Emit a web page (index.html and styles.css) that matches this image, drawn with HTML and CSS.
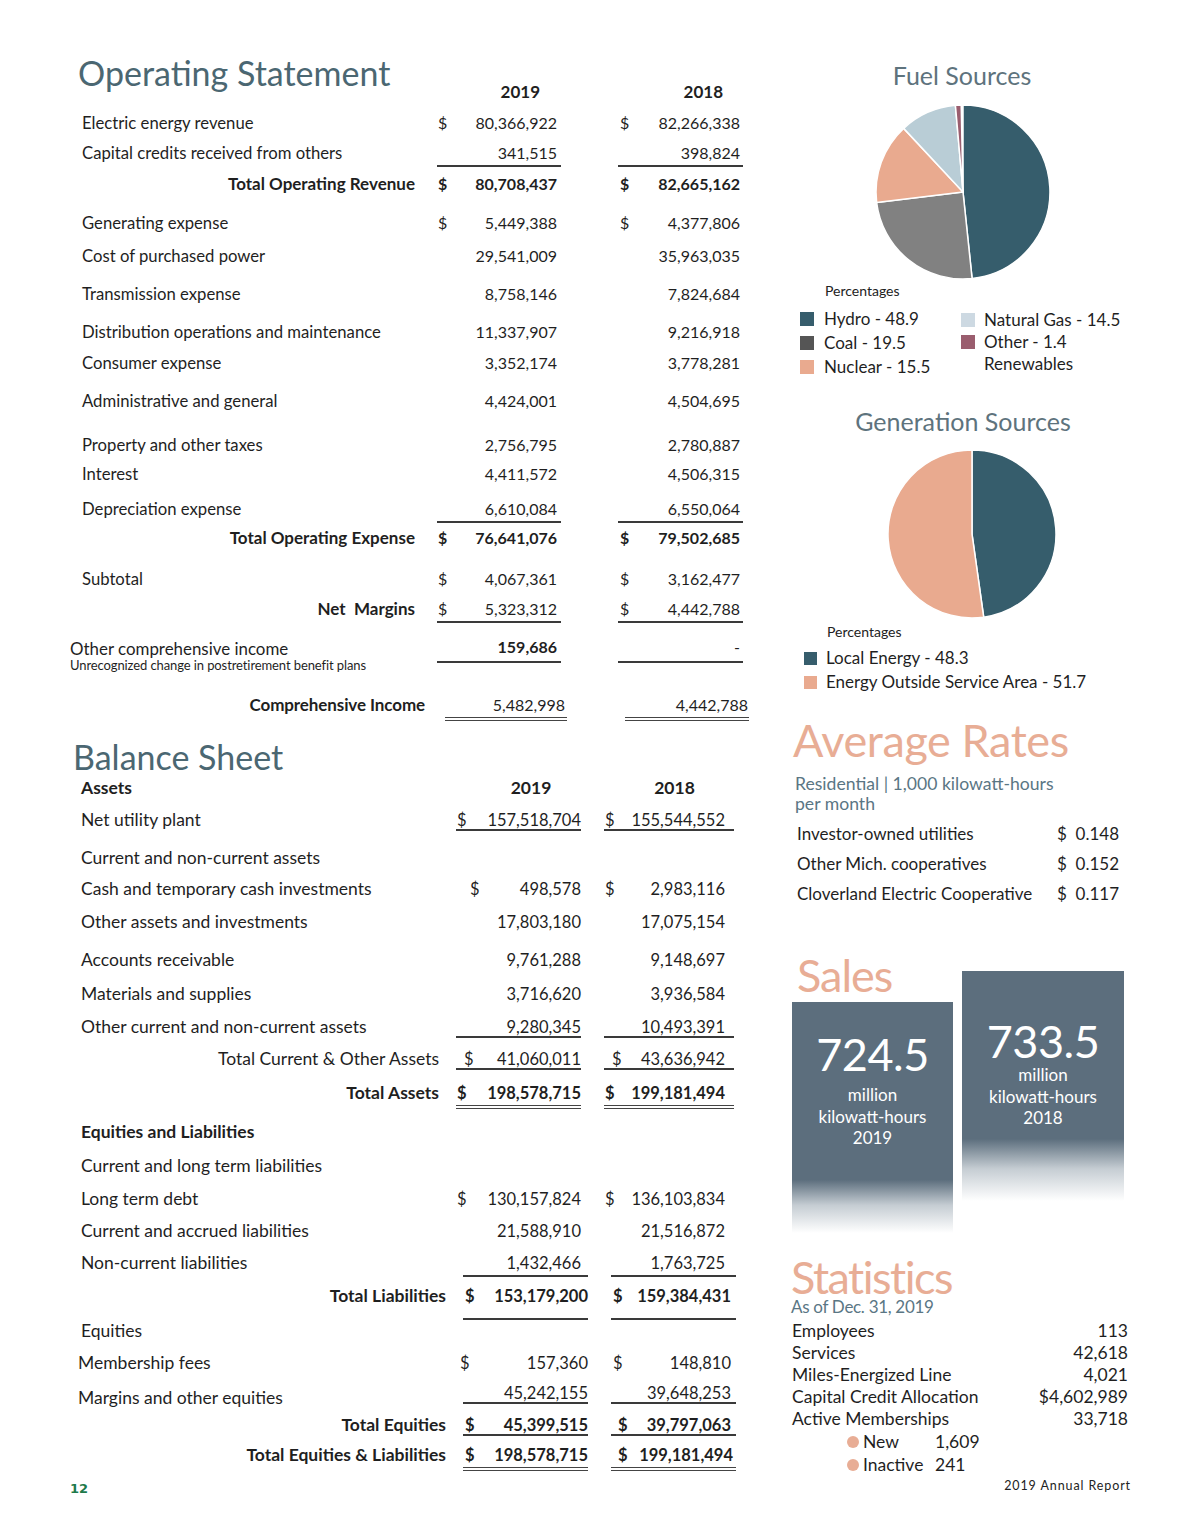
FILE: index.html
```html
<!DOCTYPE html>
<html lang="en">
<head>
<meta charset="utf-8">
<title>2019 Annual Report – Financials</title>
<link rel="stylesheet" href="styles.css">
</head>
<body>
<div class="page">
  <div class="left">
    <section class="os">
      <div class="os-head">
        <h1 class="title">Operating Statement</h1>
        <div class="yr yr1">2019</div><div></div><div class="yr yr2">2018</div>
      </div>
      <div class="r mt3"><span class="lbl">Electric energy revenue</span><span class="c"><span class="cur">$</span><span class="amt">80,366,922</span></span><span></span><span class="c"><span class="cur">$</span><span class="amt">82,266,338</span></span></div>
      <div class="r mt2"><span class="lbl">Capital credits received from others</span><span class="c ln"><span class="amt">341,515</span></span><span></span><span class="c ln"><span class="amt">398,824</span></span></div>
      <div class="r mt3 bold"><span class="lbl tot">Total Operating Revenue</span><span class="c"><span class="cur">$</span><span class="amt">80,708,437</span></span><span></span><span class="c"><span class="cur">$</span><span class="amt">82,665,162</span></span></div>
      <div class="r mt11"><span class="lbl">Generating expense</span><span class="c"><span class="cur">$</span><span class="amt">5,449,388</span></span><span></span><span class="c"><span class="cur">$</span><span class="amt">4,377,806</span></span></div>
      <div class="r mt5"><span class="lbl">Cost of purchased power</span><span class="c"><span class="amt">29,541,009</span></span><span></span><span class="c"><span class="amt">35,963,035</span></span></div>
      <div class="r mt10"><span class="lbl">Transmission expense</span><span class="c"><span class="amt">8,758,146</span></span><span></span><span class="c"><span class="amt">7,824,684</span></span></div>
      <div class="r mt10"><span class="lbl">Distribution operations and maintenance</span><span class="c"><span class="amt">11,337,907</span></span><span></span><span class="c"><span class="amt">9,216,918</span></span></div>
      <div class="r mt3"><span class="lbl">Consumer expense</span><span class="c"><span class="amt">3,352,174</span></span><span></span><span class="c"><span class="amt">3,778,281</span></span></div>
      <div class="r mt10"><span class="lbl">Administrative and general</span><span class="c"><span class="amt">4,424,001</span></span><span></span><span class="c"><span class="amt">4,504,695</span></span></div>
      <div class="r mt16"><span class="lbl">Property and other taxes</span><span class="c"><span class="amt">2,756,795</span></span><span></span><span class="c"><span class="amt">2,780,887</span></span></div>
      <div class="r mt1"><span class="lbl">Interest</span><span class="c"><span class="amt">4,411,572</span></span><span></span><span class="c"><span class="amt">4,506,315</span></span></div>
      <div class="r mt7"><span class="lbl">Depreciation expense</span><span class="c ln"><span class="amt">6,610,084</span></span><span></span><span class="c ln"><span class="amt">6,550,064</span></span></div>
      <div class="r mt1 bold"><span class="lbl tot">Total Operating Expense</span><span class="c"><span class="cur">$</span><span class="amt">76,641,076</span></span><span></span><span class="c"><span class="cur">$</span><span class="amt">79,502,685</span></span></div>
      <div class="r mt13"><span class="lbl">Subtotal</span><span class="c"><span class="cur">$</span><span class="amt">4,067,361</span></span><span></span><span class="c"><span class="cur">$</span><span class="amt">3,162,477</span></span></div>
      <div class="r mt2"><span class="lbl tot bold">Net&nbsp; Margins</span><span class="c ln"><span class="cur">$</span><span class="amt">5,323,312</span></span><span></span><span class="c ln"><span class="cur">$</span><span class="amt">4,442,788</span></span></div>
      <div class="r mt10"><span class="lbl lbl-oci"><span class="oci-main">Other comprehensive income</span><span class="oci-sub">Unrecognized change in postretirement benefit plans</span></span><span class="c ln30"><span class="amt bold">159,686</span></span><span></span><span class="c ln30"><span class="amt">-</span></span></div>
      <div class="r r-ci mt19"><span class="lbl tot bold ci-lbl">Comprehensive Income</span><span class="c dbl"><span class="amt">5,482,998</span></span><span></span><span class="c dbl"><span class="amt">4,442,788</span></span></div>
    </section>

    <section class="bs">
      <h1 class="title bs-title">Balance Sheet</h1>
      <div class="r bs-a bs-head bold"><span class="lbl">Assets</span><span class="yr3">2019</span><span></span><span class="yr4">2018</span></div>
      <div class="r bs-a mt5"><span class="lbl">Net utility plant</span><span class="c ul"><span class="cur">$</span><span class="amt">157,518,704</span></span><span></span><span class="c ul"><span class="cur">$</span><span class="amt">155,544,552</span></span></div>
      <div class="r bs-a mt10"><span class="lbl">Current and non-current assets</span></div>
      <div class="r bs-a mt3"><span class="lbl">Cash and temporary cash investments</span><span class="c"><span class="cur cur-in">$</span><span class="amt">498,578</span></span><span></span><span class="c"><span class="cur">$</span><span class="amt">2,983,116</span></span></div>
      <div class="r bs-a mt5"><span class="lbl">Other assets and investments</span><span class="c"><span class="amt">17,803,180</span></span><span></span><span class="c"><span class="amt">17,075,154</span></span></div>
      <div class="r bs-a mt10"><span class="lbl">Accounts receivable</span><span class="c"><span class="amt">9,761,288</span></span><span></span><span class="c"><span class="amt">9,148,697</span></span></div>
      <div class="r bs-a mt6"><span class="lbl">Materials and supplies</span><span class="c"><span class="amt">3,716,620</span></span><span></span><span class="c"><span class="amt">3,936,584</span></span></div>
      <div class="r bs-a mt5"><span class="lbl">Other current and non-current assets</span><span class="c ul"><span class="amt">9,280,345</span></span><span></span><span class="c ul"><span class="amt">10,493,391</span></span></div>
      <div class="r bs-a mt4"><span class="lbl tot">Total Current &amp; Other Assets</span><span class="c ul"><span class="cur cur-s">$</span><span class="amt">41,060,011</span></span><span></span><span class="c ul"><span class="cur cur-s">$</span><span class="amt">43,636,942</span></span></div>
      <div class="r bs-a mt6 bold"><span class="lbl tot">Total Assets</span><span class="c dbl"><span class="cur">$</span><span class="amt">198,578,715</span></span><span></span><span class="c dbl"><span class="cur">$</span><span class="amt">199,181,494</span></span></div>
      <div class="r bs-a mt9 bold"><span class="lbl">Equities and Liabilities</span></div>
      <div class="r bs-a mt6"><span class="lbl">Current and long term liabilities</span></div>
      <div class="r bs-a mt5"><span class="lbl">Long term debt</span><span class="c"><span class="cur">$</span><span class="amt">130,157,824</span></span><span></span><span class="c"><span class="cur">$</span><span class="amt">136,103,834</span></span></div>
      <div class="r bs-a mt4"><span class="lbl">Current and accrued liabilities</span><span class="c"><span class="amt">21,588,910</span></span><span></span><span class="c"><span class="amt">21,516,872</span></span></div>
      <div class="r bs-b mt4"><span class="lbl">Non-current liabilities</span><span class="c ln nc1"><span class="amt">1,432,466</span></span><span></span><span class="c ln nc2"><span class="amt">1,763,725</span></span></div>
      <div class="r bs-b mt5 bold"><span class="lbl tot">Total Liabilities</span><span class="c tl"><span class="cur">$</span><span class="amt">153,179,200</span></span><span></span><span class="c tl"><span class="cur">$</span><span class="amt">159,384,431</span></span></div>
      <div class="r bs-b eq"><span class="lbl">Equities</span></div>
      <div class="r bs-b mt6"><span class="lbl lbl-in">Membership fees</span><span class="c"><span class="cur cur-l">$</span><span class="amt">157,360</span></span><span></span><span class="c"><span class="cur">$</span><span class="amt">148,810</span></span></div>
      <div class="r bs-b mt2"><span class="lbl lbl-in lbl-low">Margins and other equities</span><span class="c ul"><span class="amt">45,242,155</span></span><span></span><span class="c ul"><span class="amt">39,648,253</span></span></div>
      <div class="r bs-b mt3 bold"><span class="lbl tot">Total Equities</span><span class="c ul ul-t"><span class="cur">$</span><span class="amt">45,399,515</span></span><span></span><span class="c ul ul-t"><span class="cur cur-r">$</span><span class="amt">39,797,063</span></span></div>
      <div class="r bs-b mt2 bold"><span class="lbl tot">Total Equities &amp; Liabilities</span><span class="c dbl"><span class="cur">$</span><span class="amt">198,578,715</span></span><span></span><span class="c dbl"><span class="cur cur-r">$</span><span class="amt">199,181,494</span></span></div>
    </section>

    <div class="pageno">12</div>
  </div>

  <div class="right">
    <h2 class="chart-title fuel-title">Fuel Sources</h2>
    <svg class="pie pie1" width="180" height="180" viewBox="0 0 180 180" aria-label="Fuel sources pie chart">
      <g stroke="#ffffff" stroke-width="1.5" stroke-linejoin="round">
        <path d="M90 90 L90 3 A87 87 0 0 1 99.09 176.52 Z" fill="#365d6c"/>
        <path d="M90 90 L99.09 176.52 A87 87 0 0 1 3.65 100.6 Z" fill="#818181"/>
        <path d="M90 90 L3.65 100.6 A87 87 0 0 1 30.67 26.37 Z" fill="#e9aa8f"/>
        <path d="M90 90 L30.67 26.37 A87 87 0 0 1 82.42 3.33 Z" fill="#b9cdd6"/>
        <path d="M90 90 L82.42 3.33 A87 87 0 0 1 88.2 3.02 Z" fill="#9a5d6e"/>
      </g>
    </svg>
    <div class="pct pct1">Percentages</div>
    <div class="legend">
      <div class="lg-col lg-col1">
        <div class="lg"><span class="sw sw-hydro"></span>Hydro - 48.9</div>
        <div class="lg"><span class="sw sw-coal"></span>Coal - 19.5</div>
        <div class="lg"><span class="sw sw-nuc"></span>Nuclear - 15.5</div>
      </div>
      <div class="lg-col lg-col2">
        <div class="lg"><span class="sw sw-gas"></span>Natural Gas - 14.5</div>
        <div class="lg"><span class="sw sw-oth"></span>Other - 1.4</div>
        <div class="lg"><span class="sw sw-none"></span>Renewables</div>
      </div>
    </div>

    <h2 class="chart-title gen-title">Generation Sources</h2>
    <svg class="pie pie2" width="172" height="172" viewBox="0 0 172 172" aria-label="Generation sources pie chart">
      <g stroke="#ffffff" stroke-width="1.5" stroke-linejoin="round">
        <path d="M86 86 L86 2 A84 84 0 0 1 97.69 169.18 Z" fill="#365d6c"/>
        <path d="M86 86 L97.69 169.18 A84 84 0 1 1 86 2 Z" fill="#e9aa8f"/>
      </g>
    </svg>
    <div class="pct pct2">Percentages</div>
    <div class="legend2">
      <div class="lg"><span class="sw sw-hydro"></span>Local Energy - 48.3</div>
      <div class="lg"><span class="sw sw-nuc"></span>Energy Outside Service Area - 51.7</div>
    </div>

    <h2 class="big-title rates-title">Average Rates</h2>
    <div class="sub res">Residential | 1,000 kilowatt-hours<br>per month</div>
    <div class="rates">
      <div class="rate"><span>Investor-owned utilities</span><span>$&nbsp; 0.148</span></div>
      <div class="rate"><span>Other Mich. cooperatives</span><span>$&nbsp; 0.152</span></div>
      <div class="rate"><span>Cloverland Electric Cooperative</span><span>$&nbsp; 0.117</span></div>
    </div>

    <div class="sales">
      <div class="sales-col">
        <h2 class="big-title sales-title">Sales</h2>
        <div class="box box1">
          <div class="box-num">724.5</div>
          <div class="box-txt">million<br>kilowatt-hours<br>2019</div>
        </div>
      </div>
      <div class="box box2">
        <div class="box-num">733.5</div>
        <div class="box-txt">million<br>kilowatt-hours<br>2018</div>
      </div>
    </div>

    <h2 class="big-title stats-title">Statistics</h2>
    <div class="sub asof">As of Dec. 31, 2019</div>
    <div class="stats">
      <div class="st"><span>Employees</span><span>113</span></div>
      <div class="st"><span>Services</span><span>42,618</span></div>
      <div class="st"><span>Miles-Energized Line</span><span>4,021</span></div>
      <div class="st"><span>Capital Credit Allocation</span><span>$4,602,989</span></div>
      <div class="st"><span>Active Memberships</span><span>33,718</span></div>
      <div class="mem"><span class="dot"></span><span class="mem-l">New</span><span>1,609</span></div>
      <div class="mem"><span class="dot"></span><span class="mem-l">Inactive</span><span>241</span></div>
    </div>
    <div class="report">2019 Annual Report</div>
  </div>
</div>
</body>
</html>
```

FILE: styles.css
```css
html, body {
  margin: 0;
  padding: 0;
  background: #ffffff;
}
body {
  font-family: Lato, "Open Sans", "Liberation Sans", sans-serif;
  color: #1f1f1f;
}
.page {
  width: 1200px;
  height: 1540px;
  box-sizing: border-box;
  display: flex;
  align-items: flex-start;
  padding: 50px 0 0 70px;
}
.left { width: 690px; }
.right { width: 340px; margin-left: 30px; }

.bold { font-weight: 700; }

/* titles */
.title {
  margin: 0;
  font-weight: 400;
  font-size: 34px;
  line-height: 46px;
  color: #4b6772;
  padding-left: 8px;
  white-space: nowrap;
}

/* generic rows */
.r {
  display: grid;
  align-items: start;
  font-size: 16px;
  line-height: 28px;
}
.lbl { padding-left: 12px; white-space: nowrap; font-size: 16.7px; }
.tot { text-align: right; }
.os .bold .tot, .os .tot.bold { font-size: 17px; }
.c {
  display: flex;
  justify-content: space-between;
  height: 28px;
  box-sizing: border-box;
  white-space: nowrap;
}
.amt { margin-left: auto; }
.ln { border-bottom: 2px solid #3a3a3a; }
.ln30 { height: 30px; border-bottom: 2px solid #3a3a3a; }
.dbl {
  height: 30px;
  padding-top: 2px;
  line-height: 24px;
  border-bottom: 4px double #444;
}

.mt1 { margin-top: 1px; }
.mt2 { margin-top: 2px; }
.mt3 { margin-top: 3px; }
.mt4 { margin-top: 4px; }
.mt5 { margin-top: 5px; }
.mt6 { margin-top: 6px; }
.mt7 { margin-top: 7px; }
.mt9 { margin-top: 9px; }
.mt10 { margin-top: 10px; }
.mt11 { margin-top: 11px; }
.mt13 { margin-top: 13px; }
.mt16 { margin-top: 16px; }
.mt19 { margin-top: 19px; }

/* operating statement */
.os-head {
  display: grid;
  grid-template-columns: 367px 124px 57px 125px;
  height: 56px;
}
.yr {
  font-weight: 700;
  font-size: 17px;
  line-height: 28px;
  margin-top: 28px;
  text-align: right;
}
.yr1 { padding-right: 21px; }
.yr2 { padding-right: 20px; }

.os .r { grid-template-columns: 367px 124px 57px 125px; }
.os .r .tot { padding-right: 22px; }
.os .r > :nth-child(2) { padding-left: 1px; padding-right: 4px; }
.os .r > :nth-child(4) { padding-left: 2px; padding-right: 3px; }
.os .r > .dbl:nth-child(2) { padding-left: 0; padding-right: 2px; }
.os .r > .dbl:nth-child(4) { padding-left: 0; padding-right: 1px; }
.os .r-ci { grid-template-columns: 375px 122px 58px 124px; }
.os .r-ci .tot { padding-right: 20px; }
.os .ci-lbl { font-size: 17.6px; letter-spacing: -0.1px; }

.lbl-oci {
  padding-left: 0;
  padding-top: 7px;
  display: flex;
  flex-direction: column;
}
.oci-main { font-size: 16.9px; line-height: 18px; }
.oci-sub { font-size: 13px; line-height: 14px; letter-spacing: -0.1px; }

/* balance sheet */
.bs-title {
  margin-top: 18px;
  line-height: 36px;
  padding-left: 3px;
}
.bs .r { font-size: 16.5px; }
.bs .lbl { padding-left: 11px; font-size: 17.5px; }
.bs-a { grid-template-columns: 386px 125px 23px 130px; }
.bs-b { grid-template-columns: 393px 125px 23px 125px; }
.bs .r .tot { padding-right: 17px; }
.bs-b .tot { padding-right: 21px; }
.bs-a > :nth-child(2) { padding-left: 1px; padding-right: 0; }
.bs-a > :nth-child(4) { padding-left: 1px; padding-right: 9px; }
.bs-b > :nth-child(2) { padding-left: 2px; padding-right: 0; }
.bs-b > :nth-child(4) { padding-left: 2px; padding-right: 5px; }
.bs-head { line-height: 26px; font-size: 17.5px !important; }
.bs-head > .yr3 { text-align: center; padding-left: 25px; }
.bs-head > .yr4 { text-align: center; padding-left: 20px; }
.cur-in { padding-left: 13px; }
.cur-s { padding-left: 7px; }
.cur-l { margin-left: -5px; }
.cur-r { padding-left: 5px; }
.ul {
  height: 25px;
  padding-top: 4px;
  line-height: 20px;
  border-bottom: 2px solid #3a3a3a;
}
.ul-t { padding-top: 5px; line-height: 18px; height: 25px; }
.bs-b > .nc1 { padding-right: 7px; }
.bs-b > .nc2 { padding-right: 11px; }
.tl {
  height: 38px;
  padding-bottom: 8px;
  border-bottom: 2px solid #3a3a3a;
}
.bs-b > .dbl:nth-child(2) { padding-left: 2px; padding-right: 0; }
.bs-b > .dbl:nth-child(4) { padding-left: 2px; padding-right: 3px; }
.eq { margin-top: -1px; line-height: 24px; }
.bs .lbl-in { padding-left: 8px; }
.lbl-low { padding-top: 9px; line-height: 20px; }

.pageno {
  margin-top: 10px;
  font-family: "DejaVu Sans", sans-serif;
  font-weight: 700;
  font-size: 13px;
  line-height: 16px;
  color: #1e7a4b;
}

/* right column */
.chart-title {
  margin: 0;
  font-weight: 400;
  font-size: 25px;
  line-height: 30px;
  color: #5e737d;
  text-align: center;
}
.fuel-title { margin-top: 10px; padding-left: 4px; }
.pie { display: block; }
.pie1 { margin: 12px 0 0 83px; }
.pct {
  font-size: 14px;
  line-height: 18px;
  color: #222;
}
.pct1 { padding-left: 35px; }
.legend {
  display: flex;
  margin-top: 7px;
  padding-left: 10px;
  font-size: 17px;
}
.lg-col1 { width: 161px; line-height: 24px; }
.lg-col2 { line-height: 22px; margin-top: 2px; }
.lg { display: flex; align-items: center; white-space: nowrap; }
.sw {
  width: 14px;
  height: 14px;
  margin-right: 10px;
  flex: none;
}
.lg-col2 .sw { margin-right: 9px; }
.sw-hydro { background: #365d6c; }
.sw-coal { background: #555555; }
.sw-nuc { background: #e9aa8f; }
.sw-gas { background: #cdd9e2; }
.sw-oth { background: #9a5d6e; }
.sw-none { background: transparent; }

.gen-title { margin-top: 27px; padding-left: 6px; }
.pie2 { margin: 12px 0 0 96px; }
.pct2 { margin-top: 3px; padding-left: 37px; }
.legend2 {
  margin-top: 5px;
  padding-left: 14px;
  font-size: 17px;
  line-height: 24px;
}
.legend2 .sw { width: 13px; height: 13px; margin-right: 9px; }

.big-title {
  margin: 0;
  font-weight: 400;
  font-size: 45px;
  line-height: 50px;
  color: #e8ad95;
  white-space: nowrap;
}
.rates-title { margin-top: 21px; padding-left: 3px; letter-spacing: -0.4px; }
.sub {
  font-size: 17.6px;
  line-height: 20px;
  color: #5a7684;
  padding-left: 5px;
}
.res { margin-top: 9px; }
.rates { margin-top: 5px; padding-left: 7px; font-size: 17px; line-height: 30px; }
.rate { display: grid; grid-template-columns: 260px auto; }

.sales {
  display: flex;
  align-items: flex-start;
  gap: 9px;
  margin-top: 41px;
  margin-left: 2px;
}
.sales-title { padding-left: 5px; letter-spacing: -1px; }
.box {
  color: #ffffff;
  text-align: center;
  box-sizing: border-box;
}
.box1 {
  width: 161px;
  height: 231px;
  margin-top: 2px;
  padding-top: 30px;
  background: linear-gradient(to bottom, #5c6e7d 0%, #5c6e7d 77%, rgba(140,155,167,0.5) 88%, rgba(255,255,255,0) 100%);
}
.box2 {
  width: 162px;
  height: 230px;
  margin-top: 21px;
  padding-top: 48px;
  background: linear-gradient(to bottom, #5c6e7d 0%, #5c6e7d 73%, rgba(140,155,167,0.5) 86%, rgba(255,255,255,0) 100%);
}
.box-num {
  font-size: 45px;
  line-height: 44px;
  letter-spacing: -0.5px;
}
.box-txt {
  font-size: 17px;
  line-height: 21.5px;
}
.box1 .box-txt { margin-top: 8px; }
.box2 .box-txt { margin-top: 1px; }

.stats-title { margin-top: 24px; line-height: 40px; padding-left: 1px; letter-spacing: -1.5px; }
.asof { margin-top: 0; padding-left: 1px; letter-spacing: -0.3px; font-size: 17px; }
.stats {
  margin-top: 3px;
  padding-left: 2px;
  width: 336px;
  font-size: 17.5px;
  line-height: 22px;
}
.st { display: flex; justify-content: space-between; }
.mem {
  display: flex;
  align-items: center;
  padding-left: 55px;
  line-height: 23px;
}
.dot {
  width: 12px;
  height: 12px;
  border-radius: 50%;
  background: #e8ad95;
  margin-right: 4px;
}
.mem-l { width: 72px; }
.report {
  margin-top: 2px;
  width: 341px;
  text-align: right;
  font-size: 12.5px;
  line-height: 16px;
  letter-spacing: 0.9px;
  color: #222;
}
```
